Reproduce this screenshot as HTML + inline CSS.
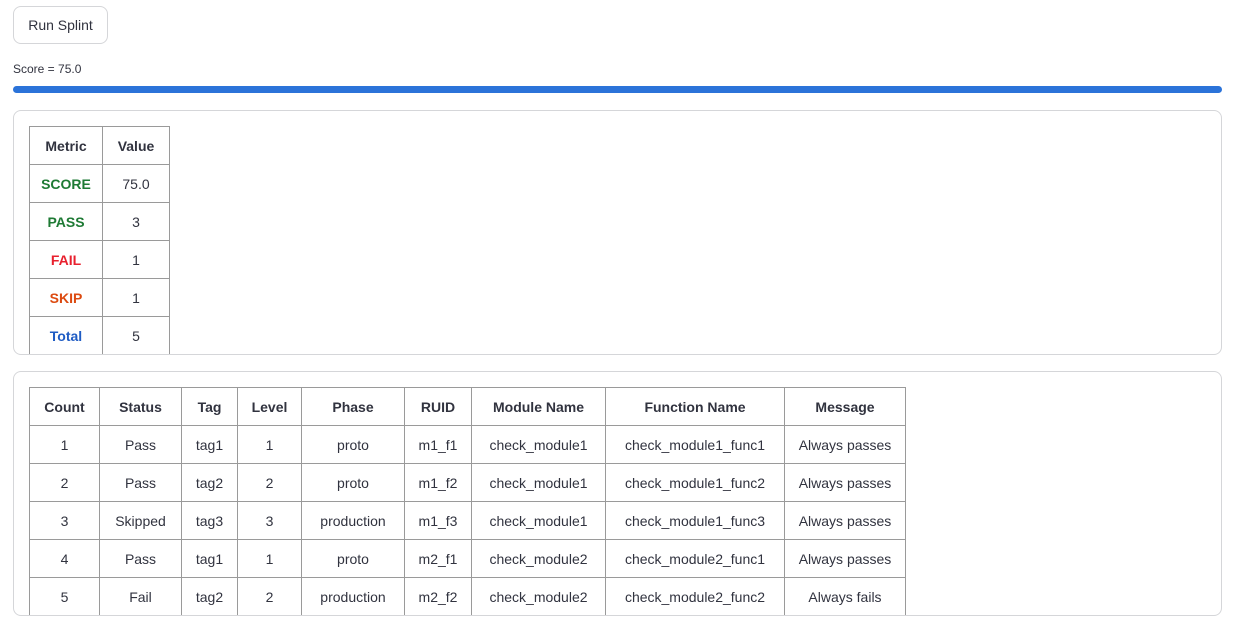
<!DOCTYPE html>
<html><head><style>
body{margin:0;background:#fff;font-family:"Liberation Sans",sans-serif;color:#31333f;width:1234px;height:628px;overflow:hidden;position:relative}
.btn{position:absolute;left:13px;top:6px;width:93px;height:36px;border:1px solid #d5d6d9;border-radius:8px;font-size:14px;line-height:36px;text-align:center;box-sizing:content-box}
.lbl{position:absolute;left:13px;top:62px;font-size:12px}
.bar{position:absolute;left:13px;top:86px;width:1209px;height:7px;border-radius:4px;background:#2b73d9}
.panel{position:absolute;left:13px;width:1207px;border:1px solid #d5d6d9;border-radius:8px;overflow:hidden}
table{position:absolute;left:15px;top:15px;border-collapse:collapse;table-layout:fixed;font-size:14px}
td,th{border:1px solid #9a9a9a;height:37px;padding:0;text-align:center;white-space:nowrap;overflow:hidden}
th{font-weight:bold;color:#31333f}
.g{color:#1e7a34;font-weight:bold}.r{color:#e8202e;font-weight:bold}.o{color:#dc4a10;font-weight:bold}.b{color:#1f5cc4;font-weight:bold}
</style></head><body>
<div class="btn">Run Splint</div>
<div class="lbl">Score = 75.0</div>
<div class="bar"></div>
<div class="panel" style="top:110px;height:243px">
<table style="width:141px"><colgroup><col style="width:73px"><col style="width:67px"></colgroup>
<tr><th>Metric</th><th>Value</th></tr>
<tr><td class="g">SCORE</td><td>75.0</td></tr>
<tr><td class="g">PASS</td><td>3</td></tr>
<tr><td class="r">FAIL</td><td>1</td></tr>
<tr><td class="o">SKIP</td><td>1</td></tr>
<tr><td class="b">Total</td><td>5</td></tr>
</table></div>
<div class="panel" style="top:371px;height:243px">
<table style="width:877px"><colgroup><col style="width:70px"><col style="width:82px"><col style="width:56px"><col style="width:64px"><col style="width:103px"><col style="width:67px"><col style="width:134px"><col style="width:179px"><col style="width:121px"></colgroup>
<tr><th>Count</th><th>Status</th><th>Tag</th><th>Level</th><th>Phase</th><th>RUID</th><th>Module Name</th><th>Function Name</th><th>Message</th></tr>
<tr><td>1</td><td>Pass</td><td>tag1</td><td>1</td><td>proto</td><td>m1_f1</td><td>check_module1</td><td>check_module1_func1</td><td>Always passes</td></tr>
<tr><td>2</td><td>Pass</td><td>tag2</td><td>2</td><td>proto</td><td>m1_f2</td><td>check_module1</td><td>check_module1_func2</td><td>Always passes</td></tr>
<tr><td>3</td><td>Skipped</td><td>tag3</td><td>3</td><td>production</td><td>m1_f3</td><td>check_module1</td><td>check_module1_func3</td><td>Always passes</td></tr>
<tr><td>4</td><td>Pass</td><td>tag1</td><td>1</td><td>proto</td><td>m2_f1</td><td>check_module2</td><td>check_module2_func1</td><td>Always passes</td></tr>
<tr><td>5</td><td>Fail</td><td>tag2</td><td>2</td><td>production</td><td>m2_f2</td><td>check_module2</td><td>check_module2_func2</td><td>Always fails</td></tr>
</table></div>
</body></html>
